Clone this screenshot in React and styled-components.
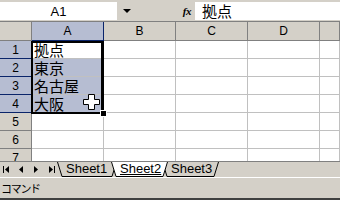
import React from 'react';
import styled, { createGlobalStyle } from 'styled-components';

const GlobalStyle = createGlobalStyle`
  html, body {
    margin: 0;
    padding: 0;
    background: #d4d0c8;
  }
  body {
    width: 340px;
    height: 200px;
    overflow: hidden;
    font-family: "Liberation Sans", Arial, sans-serif;
  }
`;

const HEADER_BG = '#d4d0c8';
const SEL_BG = '#b6bdd2';
const NAVY = '#0a246a';
const GRID = '#c0c0c0';

const Window = styled.div`
  display: flex;
  flex-direction: column;
  width: 340px;
  height: 200px;
  background: ${HEADER_BG};
`;

const FormulaBar = styled.div`
  display: flex;
  align-items: center;
  height: 21px;
  padding-top: 1px;
  box-sizing: border-box;
`;

const NameBox = styled.div`
  width: 117px;
  height: 18px;
  background: #fff;
  display: flex;
  align-items: center;
  justify-content: center;
  font-size: 13px;
  color: #000;
`;

const DropZone = styled.div`
  width: 78px;
  height: 18px;
  display: flex;
  align-items: center;
`;

const Arrow = styled.span`
  width: 0;
  height: 0;
  margin-left: 6px;
  border-left: 4px solid transparent;
  border-right: 4px solid transparent;
  border-top: 4px solid #000;
`;

const Fx = styled.span`
  margin-left: auto;
  margin-right: 4px;
  font-family: "Liberation Serif", serif;
  font-style: italic;
  font-weight: bold;
  font-size: 11px;
  letter-spacing: -0.5px;
`;

const FormulaInput = styled.div`
  flex: 1;
  height: 18px;
  background: #fff;
  display: flex;
  align-items: center;
  padding-left: 7px;
  font-family: "Noto Sans CJK JP", sans-serif;
  font-size: 15px;
  line-height: 18px;
  color: #000;
`;

const GridWrap = styled.div`
  position: relative;
  height: 140px;
  overflow: hidden;
  background: #fff;
  border-top: 1px solid #808080;
  box-sizing: border-box;
`;

const Sheet = styled.div`
  display: grid;
  grid-template-columns: 32px 72px 72px 72px 72px 1fr;
  grid-template-rows: 19px repeat(7, 18px);
`;

const ColHead = styled.div`
  background: ${p => (p.$sel ? SEL_BG : HEADER_BG)};
  border-right: 1px solid ${p => (p.$sel ? NAVY : '#808080')};
  border-bottom: 1px solid ${p => (p.$sel ? NAVY : '#808080')};
  display: flex;
  align-items: center;
  justify-content: center;
  font-size: 12px;
  color: #000;
`;

const RowHead = styled(ColHead)``;

const Cell = styled.div`
  background: ${p => (p.$sel ? SEL_BG : '#fff')};
  border-right: 1px solid ${GRID};
  border-bottom: 1px solid ${GRID};
  padding-left: 2px;
  font-family: "Noto Sans CJK JP", sans-serif;
  font-size: 15px;
  line-height: 17px;
  color: #000;
  white-space: nowrap;
`;

const Selection = styled.div`
  position: absolute;
  left: 31px;
  top: 19px;
  width: 73px;
  height: 73px;
  border: 2px solid #000;
  border-right-width: 3px;
  box-sizing: border-box;
  pointer-events: none;
`;

const FillHandle = styled.div`
  position: absolute;
  left: 100px;
  top: 88px;
  width: 5px;
  height: 5px;
  background: #000;
  border: 1px solid #fff;
`;

const Cursor = styled.svg`
  position: absolute;
  left: 83px;
  top: 72px;
`;

const TabBar = styled.div`
  display: flex;
  align-items: flex-start;
  height: 15px;
  border-top: 1px solid #808080;
`;

const NavButtons = styled.div`
  display: flex;
  align-items: center;
  width: 63px;
  height: 15px;
`;

const NavIcon = styled.svg`
  margin-left: ${p => p.$ml}px;
`;

const Tab = styled.div`
  position: relative;
  width: ${p => p.$w}px;
  height: 15px;
  margin-left: -6px;
  padding-left: 9px;
  box-sizing: border-box;
  z-index: ${p => (p.$active ? 2 : 1)};
  font-size: 13px;
  line-height: 14px;
  color: #000;

  span {
    position: relative;
    text-decoration: ${p => (p.$active ? 'underline' : 'none')};
    text-underline-offset: 1px;
  }
`;

const TabShape = styled.svg`
  position: absolute;
  left: 0;
  top: 0;
`;

const StatusBar = styled.div`
  flex: 1;
  display: flex;
  align-items: center;
  border-top: 1px solid #fff;
  border-bottom: 2px solid #404040;
  padding-left: 1px;
  font-family: "Noto Sans CJK JP", sans-serif;
  font-size: 11px;
  letter-spacing: -1.3px;
  color: #000;
`;

const cols = ['A', 'B', 'C', 'D', ''];
const values = ['拠点', '東京', '名古屋', '大阪', '', '', ''];

function SheetTab({ label, width, active }) {
  const w = width;
  return (
    <Tab $w={w} $active={active}>
      <TabShape width={w} height={15}>
        <polygon points={`0,0 ${w},0 ${w - 5},14.5 5,14.5`} fill={active ? '#fff' : '#d4d0c8'} />
        <polyline points={`0.5,0 5,14.5 ${w - 5},14.5 ${w - 0.5},0`} fill="none" stroke="#000" strokeWidth="1" />
      </TabShape>
      <span>{label}</span>
    </Tab>
  );
}

export default function App() {
  return (
    <>
      <GlobalStyle />
      <Window>
        <FormulaBar>
          <NameBox>A1</NameBox>
          <DropZone>
            <Arrow />
            <Fx>fx</Fx>
          </DropZone>
          <FormulaInput>拠点</FormulaInput>
        </FormulaBar>

        <GridWrap>
          <Sheet>
            <ColHead />
            {cols.map((c, i) => (
              <ColHead key={c + i} $sel={i === 0}>{c}</ColHead>
            ))}
            {values.map((v, r) => (
              <React.Fragment key={r}>
                <RowHead $sel={r < 4}>{r + 1}</RowHead>
                <Cell $sel={r > 0 && r < 4}>{v}</Cell>
                <Cell />
                <Cell />
                <Cell />
                <Cell />
              </React.Fragment>
            ))}
          </Sheet>
          <Selection />
          <FillHandle />
          <Cursor width="17" height="16" viewBox="0 0 17 16">
            <path
              d="M5.5 0.5 H11.5 V5.5 H16.5 V10.5 H11.5 V15.5 H5.5 V10.5 H0.5 V5.5 H5.5 Z"
              fill="#fff"
              stroke="#000"
              strokeWidth="1"
            />
          </Cursor>
        </GridWrap>

        <TabBar>
          <NavButtons>
            <NavIcon $ml={3} width="6" height="7" viewBox="0 0 6 7">
              <rect x="0" y="0" width="1" height="7" fill="#000" />
              <polygon points="6,0 2,3.5 6,7" fill="#000" />
            </NavIcon>
            <NavIcon $ml={10} width="4" height="7" viewBox="0 0 4 7">
              <polygon points="4,0 0,3.5 4,7" fill="#000" />
            </NavIcon>
            <NavIcon $ml={11} width="4" height="7" viewBox="0 0 4 7">
              <polygon points="0,0 4,3.5 0,7" fill="#000" />
            </NavIcon>
            <NavIcon $ml={11} width="6" height="7" viewBox="0 0 6 7">
              <polygon points="0,0 4,3.5 0,7" fill="#000" />
              <rect x="5" y="0" width="1" height="7" fill="#000" />
            </NavIcon>
          </NavButtons>
          <SheetTab label="Sheet1" width={60} />
          <SheetTab label="Sheet2" width={57} active />
          <SheetTab label="Sheet3" width={57} />
        </TabBar>

        <StatusBar>コマンド</StatusBar>
      </Window>
    </>
  );
}
